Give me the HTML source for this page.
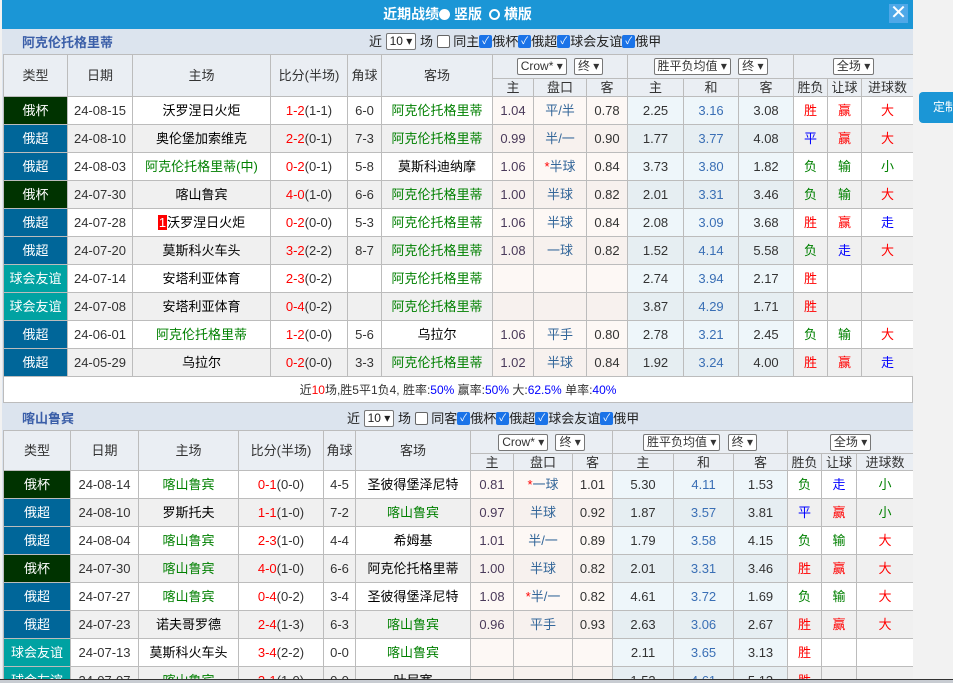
<!DOCTYPE html>
<html><head><meta charset="utf-8"><style>
*{margin:0;padding:0;box-sizing:border-box}
body{width:953px;height:683px;overflow:hidden;background:#f2f2f2;font-family:"Liberation Sans","Noto Sans CJK SC",sans-serif;font-size:13px;color:#222;position:relative}
#modal{position:absolute;left:2px;top:0;width:911px;height:683px;background:#dce4ee;overflow:hidden}
#hdr{height:29px;background:#1b96d6;color:#fff;font-weight:bold;font-size:14px;line-height:29px;text-align:center;position:relative}
#hdr .x{position:absolute;right:5px;top:4px;width:19px;height:19px;background:#4fa8e8;color:#fff;font-size:20px;line-height:19px;text-align:center;font-weight:normal}
.rad{display:inline-block;width:11px;height:11px;border-radius:50%;background:#fff;vertical-align:-1px}
.rad2{display:inline-block;width:11px;height:11px;border-radius:50%;border:2px solid #fff;vertical-align:-1px;margin-left:3px}
.tb{height:25px;position:relative;font-size:13px}
.tb .t{position:absolute;left:20px;top:6px;color:#3a5ea8;font-weight:bold;font-size:13px;line-height:16px}
.tb .c{position:absolute;top:4px;line-height:17px;white-space:nowrap;height:17px}
.sel{display:inline-block;border:1px solid #777;background:#fff;border-radius:2px;height:17px;line-height:15px;padding:0 3px;font-size:12px;vertical-align:top}
.cb{display:inline-block;width:13px;height:13px;border-radius:2px;background:#1a73e8;color:#fff;font-size:10px;line-height:13px;text-align:center;vertical-align:top;margin-top:2px}
.cbe{display:inline-block;width:13px;height:13px;border-radius:2px;border:1px solid #666;background:#fff;vertical-align:top;margin-top:2px}
table{border-collapse:collapse;table-layout:fixed;position:absolute;left:1px}
td{border:1px solid #bcbcbc;text-align:center;height:28px;padding:0;line-height:15px;white-space:nowrap;overflow:hidden;font-size:13px;color:#333}
tr.h td{background:#eaeef3;color:#333}
tr.e td{background:#f0f0f0}
tr.o td{background:#fff}
td.k1{background:#003300!important;color:#fff}
td.k2{background:#006699!important;color:#fff}
td.k3{background:#00a2a2!important;color:#fff}
tr td.p{background:#fdf8f5}
tr td.q{background:#eef6fa}
tr.e td.p{background:#f7f1ee}
tr.e td.q{background:#e6eef2}
.g{color:#008000}.r{color:#f00}.b{color:#0000ff}.pk{color:#336699}.he{color:#3a6fb5}.od{color:#4a3a5a}
.n{color:#000}
.one{background:#f00;color:#fff;padding:0 1px}
#sum{position:absolute;left:1px;top:376px;width:910px;height:27px;background:#fff;border:1px solid #bcbcbc;text-align:center;line-height:26px;font-size:12px;color:#333}
#dz{position:absolute;left:919px;top:92px;width:40px;height:31px;background:#1b96d6;border-radius:4px;color:#fff;font-size:12px;line-height:31px;padding-left:14px}
</style></head><body>
<div id="modal">
<div id="hdr">近期战绩<span class="rad"></span> 竖版 <span class="rad2"></span> 横版<span class="x">✕</span></div>
<div class="tb"><span class="t">阿克伦托格里蒂</span><span class="c" style="left:367px">近 <span class="sel">10 ▾</span> 场 <span class="cbe"></span> 同主<span class="cb">✓</span>俄杯<span class="cb">✓</span>俄超<span class="cb">✓</span>球会友谊<span class="cb">✓</span>俄甲</span></div>
<table style="top:54px;width:910px">
<colgroup><col style="width:64px"><col style="width:65px"><col style="width:138px"><col style="width:77px"><col style="width:34px"><col style="width:111px"><col style="width:41px"><col style="width:53px"><col style="width:41px"><col style="width:56px"><col style="width:55px"><col style="width:55px"><col style="width:34px"><col style="width:34px"><col style="width:52px"></colgroup>
<tr class="h" style="height:24px"><td rowspan="2" style="height:42px">类型</td><td rowspan="2">日期</td><td rowspan="2">主场</td><td rowspan="2">比分(半场)</td><td rowspan="2">角球</td><td rowspan="2">客场</td><td colspan="3" style="height:24px"><span class="sel">Crow* ▾</span> &nbsp;<span class="sel">终 ▾</span></td><td colspan="3" style="height:24px"><span class="sel">胜平负均值 ▾</span> &nbsp;<span class="sel">终 ▾</span></td><td colspan="3" style="height:24px"><span class="sel">全场 ▾</span></td></tr>
<tr class="h" style="height:18px"><td style="height:18px">主</td><td style="height:18px">盘口</td><td style="height:18px">客</td><td style="height:18px">主</td><td style="height:18px">和</td><td style="height:18px">客</td><td style="height:18px">胜负</td><td style="height:18px">让球</td><td style="height:18px">进球数</td></tr>
<tr class="o"><td class="k1">俄杯</td><td>24-08-15</td><td class="n">沃罗涅日火炬</td><td><span class="r">1-2</span>(1-1)</td><td>6-0</td><td class="g">阿克伦托格里蒂</td><td class="p od">1.04</td><td class="p pk">平/半</td><td class="p">0.78</td><td class="q">2.25</td><td class="q he">3.16</td><td class="q">3.08</td><td class="r">胜</td><td class="r">赢</td><td class="r">大</td></tr>
<tr class="e"><td class="k2">俄超</td><td>24-08-10</td><td class="n">奥伦堡加索维克</td><td><span class="r">2-2</span>(0-1)</td><td>7-3</td><td class="g">阿克伦托格里蒂</td><td class="p od">0.99</td><td class="p pk">半/一</td><td class="p">0.90</td><td class="q">1.77</td><td class="q he">3.77</td><td class="q">4.08</td><td class="b">平</td><td class="r">赢</td><td class="r">大</td></tr>
<tr class="o"><td class="k2">俄超</td><td>24-08-03</td><td class="g">阿克伦托格里蒂(中)</td><td><span class="r">0-2</span>(0-1)</td><td>5-8</td><td class="n">莫斯科迪纳摩</td><td class="p od">1.06</td><td class="p pk"><span class="r">*</span>半球</td><td class="p">0.84</td><td class="q">3.73</td><td class="q he">3.80</td><td class="q">1.82</td><td class="g">负</td><td class="g">输</td><td class="g">小</td></tr>
<tr class="e"><td class="k1">俄杯</td><td>24-07-30</td><td class="n">喀山鲁宾</td><td><span class="r">4-0</span>(1-0)</td><td>6-6</td><td class="g">阿克伦托格里蒂</td><td class="p od">1.00</td><td class="p pk">半球</td><td class="p">0.82</td><td class="q">2.01</td><td class="q he">3.31</td><td class="q">3.46</td><td class="g">负</td><td class="g">输</td><td class="r">大</td></tr>
<tr class="o"><td class="k2">俄超</td><td>24-07-28</td><td class="n"><span class="one">1</span>沃罗涅日火炬</td><td><span class="r">0-2</span>(0-0)</td><td>5-3</td><td class="g">阿克伦托格里蒂</td><td class="p od">1.06</td><td class="p pk">半球</td><td class="p">0.84</td><td class="q">2.08</td><td class="q he">3.09</td><td class="q">3.68</td><td class="r">胜</td><td class="r">赢</td><td class="b">走</td></tr>
<tr class="e"><td class="k2">俄超</td><td>24-07-20</td><td class="n">莫斯科火车头</td><td><span class="r">3-2</span>(2-2)</td><td>8-7</td><td class="g">阿克伦托格里蒂</td><td class="p od">1.08</td><td class="p pk">一球</td><td class="p">0.82</td><td class="q">1.52</td><td class="q he">4.14</td><td class="q">5.58</td><td class="g">负</td><td class="b">走</td><td class="r">大</td></tr>
<tr class="o"><td class="k3">球会友谊</td><td>24-07-14</td><td class="n">安塔利亚体育</td><td><span class="r">2-3</span>(0-2)</td><td></td><td class="g">阿克伦托格里蒂</td><td class="p"></td><td class="p"></td><td class="p"></td><td class="q">2.74</td><td class="q he">3.94</td><td class="q">2.17</td><td class="r">胜</td><td></td><td></td></tr>
<tr class="e"><td class="k3">球会友谊</td><td>24-07-08</td><td class="n">安塔利亚体育</td><td><span class="r">0-4</span>(0-2)</td><td></td><td class="g">阿克伦托格里蒂</td><td class="p"></td><td class="p"></td><td class="p"></td><td class="q">3.87</td><td class="q he">4.29</td><td class="q">1.71</td><td class="r">胜</td><td></td><td></td></tr>
<tr class="o"><td class="k2">俄超</td><td>24-06-01</td><td class="g">阿克伦托格里蒂</td><td><span class="r">1-2</span>(0-0)</td><td>5-6</td><td class="n">乌拉尔</td><td class="p od">1.06</td><td class="p pk">平手</td><td class="p">0.80</td><td class="q">2.78</td><td class="q he">3.21</td><td class="q">2.45</td><td class="g">负</td><td class="g">输</td><td class="r">大</td></tr>
<tr class="e"><td class="k2">俄超</td><td>24-05-29</td><td class="n">乌拉尔</td><td><span class="r">0-2</span>(0-0)</td><td>3-3</td><td class="g">阿克伦托格里蒂</td><td class="p od">1.02</td><td class="p pk">半球</td><td class="p">0.84</td><td class="q">1.92</td><td class="q he">3.24</td><td class="q">4.00</td><td class="r">胜</td><td class="r">赢</td><td class="b">走</td></tr>
</table>
<div id="sum">近<span class="r">10</span>场,胜5平1负4, 胜率:<span class="b">50%</span> 赢率:<span class="b">50%</span> 大:<span class="b">62.5%</span> 单率:<span class="b">40%</span></div>
<div class="tb" style="position:absolute;top:403px;left:0;width:911px;height:27px"><span class="t" style="top:8px">喀山鲁宾</span><span class="c" style="left:345px;top:7px">近 <span class="sel">10 ▾</span> 场 <span class="cbe"></span> 同客<span class="cb">✓</span>俄杯<span class="cb">✓</span>俄超<span class="cb">✓</span>球会友谊<span class="cb">✓</span>俄甲</span></div>
<table style="top:430px;width:910px">
<colgroup><col style="width:67px"><col style="width:68px"><col style="width:100px"><col style="width:85px"><col style="width:32px"><col style="width:115px"><col style="width:43px"><col style="width:59px"><col style="width:40px"><col style="width:61px"><col style="width:60px"><col style="width:54px"><col style="width:34px"><col style="width:35px"><col style="width:57px"></colgroup>
<tr class="h" style="height:23px"><td rowspan="2" style="height:40px">类型</td><td rowspan="2">日期</td><td rowspan="2">主场</td><td rowspan="2">比分(半场)</td><td rowspan="2">角球</td><td rowspan="2">客场</td><td colspan="3" style="height:23px"><span class="sel">Crow* ▾</span> &nbsp;<span class="sel">终 ▾</span></td><td colspan="3" style="height:23px"><span class="sel">胜平负均值 ▾</span> &nbsp;<span class="sel">终 ▾</span></td><td colspan="3" style="height:23px"><span class="sel">全场 ▾</span></td></tr>
<tr class="h" style="height:17px"><td style="height:17px">主</td><td style="height:17px">盘口</td><td style="height:17px">客</td><td style="height:17px">主</td><td style="height:17px">和</td><td style="height:17px">客</td><td style="height:17px">胜负</td><td style="height:17px">让球</td><td style="height:17px">进球数</td></tr>
<tr class="o"><td class="k1">俄杯</td><td>24-08-14</td><td class="g">喀山鲁宾</td><td><span class="r">0-1</span>(0-0)</td><td>4-5</td><td class="n">圣彼得堡泽尼特</td><td class="p od">0.81</td><td class="p pk"><span class="r">*</span>一球</td><td class="p">1.01</td><td class="q">5.30</td><td class="q he">4.11</td><td class="q">1.53</td><td class="g">负</td><td class="b">走</td><td class="g">小</td></tr>
<tr class="e"><td class="k2">俄超</td><td>24-08-10</td><td class="n">罗斯托夫</td><td><span class="r">1-1</span>(1-0)</td><td>7-2</td><td class="g">喀山鲁宾</td><td class="p od">0.97</td><td class="p pk">半球</td><td class="p">0.92</td><td class="q">1.87</td><td class="q he">3.57</td><td class="q">3.81</td><td class="b">平</td><td class="r">赢</td><td class="g">小</td></tr>
<tr class="o"><td class="k2">俄超</td><td>24-08-04</td><td class="g">喀山鲁宾</td><td><span class="r">2-3</span>(1-0)</td><td>4-4</td><td class="n">希姆基</td><td class="p od">1.01</td><td class="p pk">半/一</td><td class="p">0.89</td><td class="q">1.79</td><td class="q he">3.58</td><td class="q">4.15</td><td class="g">负</td><td class="g">输</td><td class="r">大</td></tr>
<tr class="e"><td class="k1">俄杯</td><td>24-07-30</td><td class="g">喀山鲁宾</td><td><span class="r">4-0</span>(1-0)</td><td>6-6</td><td class="n">阿克伦托格里蒂</td><td class="p od">1.00</td><td class="p pk">半球</td><td class="p">0.82</td><td class="q">2.01</td><td class="q he">3.31</td><td class="q">3.46</td><td class="r">胜</td><td class="r">赢</td><td class="r">大</td></tr>
<tr class="o"><td class="k2">俄超</td><td>24-07-27</td><td class="g">喀山鲁宾</td><td><span class="r">0-4</span>(0-2)</td><td>3-4</td><td class="n">圣彼得堡泽尼特</td><td class="p od">1.08</td><td class="p pk"><span class="r">*</span>半/一</td><td class="p">0.82</td><td class="q">4.61</td><td class="q he">3.72</td><td class="q">1.69</td><td class="g">负</td><td class="g">输</td><td class="r">大</td></tr>
<tr class="e"><td class="k2">俄超</td><td>24-07-23</td><td class="n">诺夫哥罗德</td><td><span class="r">2-4</span>(1-3)</td><td>6-3</td><td class="g">喀山鲁宾</td><td class="p od">0.96</td><td class="p pk">平手</td><td class="p">0.93</td><td class="q">2.63</td><td class="q he">3.06</td><td class="q">2.67</td><td class="r">胜</td><td class="r">赢</td><td class="r">大</td></tr>
<tr class="o"><td class="k3">球会友谊</td><td>24-07-13</td><td class="n">莫斯科火车头</td><td><span class="r">3-4</span>(2-2)</td><td>0-0</td><td class="g">喀山鲁宾</td><td class="p"></td><td class="p"></td><td class="p"></td><td class="q">2.11</td><td class="q he">3.65</td><td class="q">3.13</td><td class="r">胜</td><td></td><td></td></tr>
<tr class="e"><td class="k3">球会友谊</td><td>24-07-07</td><td class="g">喀山鲁宾</td><td><span class="r">3-1</span>(1-0)</td><td>0-0</td><td class="n">叶尼塞</td><td class="p"></td><td class="p"></td><td class="p"></td><td class="q">1.53</td><td class="q he">4.61</td><td class="q">5.13</td><td class="r">胜</td><td></td><td></td></tr>
</table>
</div>
<div id="dz">定制</div>
<div style="position:absolute;left:0;top:679px;width:953px;height:4px;background:#c8ccd2;border-top:1px solid #333"></div>
</body></html>
